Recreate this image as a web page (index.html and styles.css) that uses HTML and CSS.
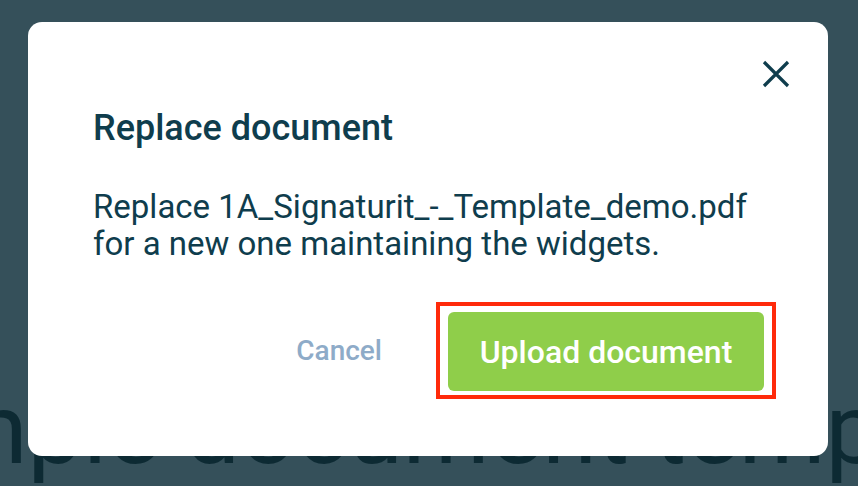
FILE: index.html
```html
<!DOCTYPE html>
<html lang="en">
<head>
    <meta charset="UTF-8">
    <meta name="viewport" content="width=device-width, initial-scale=1.0">
    <title>Replace document</title>
    <link rel="stylesheet" href="styles.css">
</head>
<body>
    <div class="page">
        <h1 class="page-title">Sample document template</h1>
    </div>

    <div class="overlay">
        <div class="modal">
            <button class="close-btn" aria-label="Close">
                <svg width="28" height="28" viewBox="0 0 28 28">
                    <path d="M2 2 L26 26 M26 2 L2 26" stroke="#0f3d4d" stroke-width="3.2" fill="none"/>
                </svg>
            </button>
            <h2 class="modal-title">Replace document</h2>
            <p class="modal-text">Replace 1A_Signaturit_-_Template_demo.pdf<br>for a new one maintaining the widgets.</p>
            <div class="modal-actions">
                <button class="btn-cancel">Cancel</button>
                <div class="highlight">
                    <button class="btn-upload">Upload document</button>
                </div>
            </div>
        </div>
    </div>
</body>
</html>
```

FILE: styles.css
```css
body {
    margin: 0;
    padding: 0;
    font-family: Roboto, "Noto Sans", sans-serif;
    background-color: #35505a;
    height: 486px;
    overflow: hidden;
}
.page {
    padding-top: 380px;
    margin-left: -172px;
    white-space: nowrap;
}
.page-title {
    margin: 0;
    font-size: 99px;
    font-weight: 400;
    color: #0d2a33;
    line-height: 1;
}
.overlay {
    position: fixed;
    top: 0;
    left: 0;
    right: 0;
    bottom: 0;
}
.modal {
    position: absolute;
    top: 22px;
    left: 28px;
    width: 800px;
    height: 434px;
    box-sizing: border-box;
    background: #fff;
    border-radius: 14px;
    padding: 81px 65px 0 65px;
}
.close-btn {
    position: absolute;
    top: 38px;
    right: 38px;
    background: none;
    border: none;
    padding: 0;
    cursor: pointer;
    display: flex;
}
.modal-title {
    margin: 0;
    font-size: 36px;
    font-weight: 500;
    color: #0f3d4d;
    line-height: 50px;
}
.modal-text {
    margin: 35px 0 0 0;
    font-size: 33px;
    line-height: 37px;
    color: #0f3d4d;
}
.modal-actions {
    display: flex;
    justify-content: flex-end;
    align-items: center;
    gap: 54px;
    margin-top: 40px;
    margin-right: -13px;
}
.btn-cancel {
    background: none;
    border: none;
    padding: 0;
    font-family: inherit;
    font-size: 28px;
    font-weight: 500;
    color: #8eabc8;
    cursor: pointer;
}
.highlight {
    border: 4px solid #ff2a0a;
    padding: 6px 8px 4px 8px;
}
.btn-upload {
    display: block;
    width: 316px;
    height: 79px;
    background-color: #8fce4a;
    color: #fff;
    border: none;
    border-radius: 6px;
    font-family: inherit;
    font-size: 32px;
    font-weight: 500;
    cursor: pointer;
}
```
